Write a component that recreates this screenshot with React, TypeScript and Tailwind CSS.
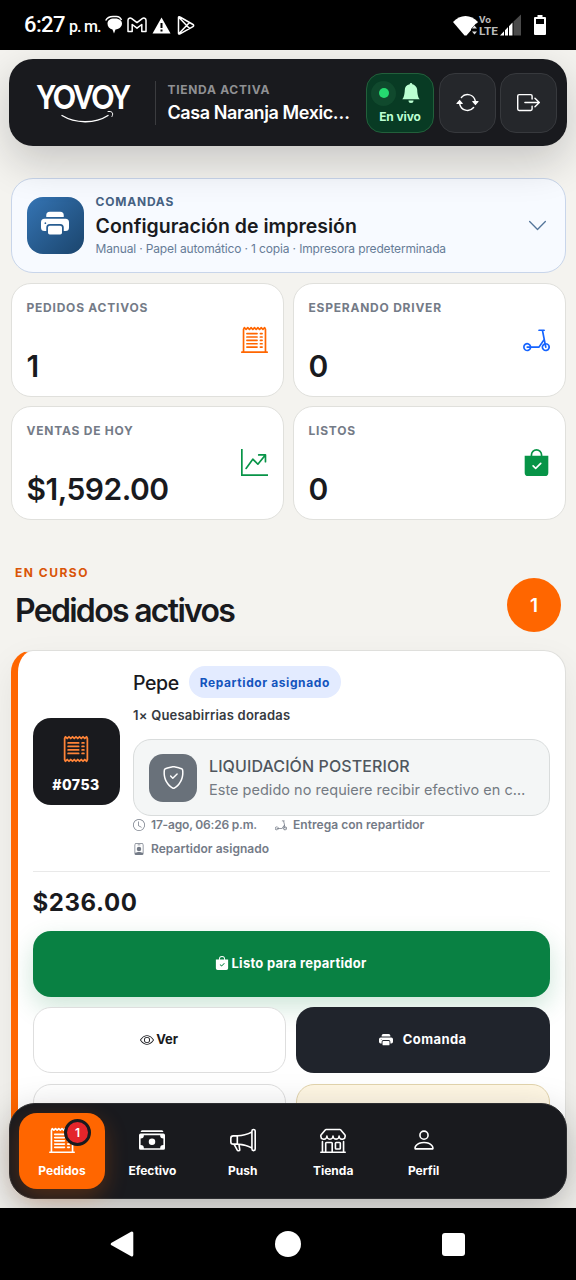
import type { IconType } from "react-icons";
import {
  BsArrowRepeat,
  BsBagCheckFill,
  BsBellFill,
  BsBoxArrowRight,
  BsCashStack,
  BsChevronDown,
  BsClock,
  BsEye,
  BsGraphUpArrow,
  BsMegaphone,
  BsPerson,
  BsPersonBadge,
  BsPrinterFill,
  BsReceipt,
  BsReceiptCutoff,
  BsScooter,
  BsShieldCheck,
  BsShop,
} from "react-icons/bs";

function StatusBar() {
  return (
    <div className="flex h-[50px] shrink-0 items-center justify-between bg-black pl-6 pr-[30px] font-['Roboto',sans-serif] text-white">
      <div className="flex items-center">
        <span className="text-[22px] font-medium leading-none tracking-[-0.6px]">6:27</span>
        <span className="ml-[4px] mt-[3px] text-[16px] font-medium leading-none tracking-[-0.8px]">p. m.</span>
        <svg className="ml-[4px]" width="18" height="20" viewBox="0 0 18 20">
          <path d="M9 3.500C5 3.500 2.500 5.500 2.500 8.500s2 5.500 5 6l1.500 4 1.500-4c4-.5 6.500-3 6.500-6S14 3 9 3.500z" fill="#fff" />
          <path d="M.7 5.500C2 3 5 1.500 8 1.500h3.500c2.500 0 4 1.300 5 3.500" fill="none" stroke="#fff" strokeWidth="1.500" />
        </svg>
        <svg className="ml-[4px]" width="20" height="16" viewBox="0 0 20 16" fill="none" stroke="#fff" strokeWidth="1.500">
          <path d="M1 3.200C1 1.200 3.200.4 4.800 1.600L10 5.600l5.200-4C16.800.4 19 1.200 19 3.200V14.500h-4.200V7.500L10 11.200 5.200 7.500v7H1z" strokeLinejoin="round" />
        </svg>
        <svg className="ml-[5px]" width="19" height="17" viewBox="0 0 19 17">
          <path d="M9.500.500L18.500 16.500H.500z" fill="#fff" />
          <path d="M8.500 6h2v5h-2zM8.500 12.500h2v2h-2z" fill="#000" />
        </svg>
        <svg className="ml-[6px]" width="18" height="19" viewBox="0 0 18 19" fill="none" stroke="#fff" strokeWidth="1.500" strokeLinejoin="round">
          <path d="M1.500 1.300v16c0 .8.8 1 1.500.6l13-7.300c.9-.5.9-1.600 0-2.100L3 1C2.200.5 1.500.7 1.500 1.300zM2 1.500l10.500 11M2 17.500l10.500-11" />
        </svg>
      </div>
      <div className="flex items-center">
        <svg width="69" height="24" viewBox="0 0 69 24">
          <path d="M0 9C7 1 18 1 25 9L13.500 22.500h-2z" fill="#fff" />
          <path d="M18 16l5-5.500h4v12h-9z" fill="#000" />
          <path d="M19 15.500l2.500-3 2.500 3zM19 18.500h5l-2.500 3z" fill="#ddd" />
          <text x="26" y="10" fontSize="9.500" fontWeight="700" fill="#bbb" textLength="12" lengthAdjust="spacingAndGlyphs">Vo</text>
          <text x="26" y="21.800" fontSize="10.500" fontWeight="700" fill="#bbb" textLength="19" lengthAdjust="spacingAndGlyphs">LTE</text>
          <path d="M47 22.500l12.500-13v13z" fill="#fff" />
          <path d="M60.500 8.500L68 1.500v21h-7.500z" fill="#4a4a4a" />
          <path d="M51.500 10v13M55.500 10v13" stroke="#000" strokeWidth="1" />
        </svg>
        <svg className="ml-[12px]" width="12" height="20" viewBox="0 0 12 20">
          <path d="M3.500 0h5v2H11a1 1 0 011 1v16a1 1 0 01-1 1H1a1 1 0 01-1-1V3a1 1 0 011-1h2.500z" fill="#fff" />
          <path d="M2 4h8v5H2z" fill="#000" />
        </svg>
      </div>
    </div>
  );
}

function Logo() {
  return (
    <svg className="-mt-2 overflow-visible" width="96" height="52" viewBox="0 -12 96 52" fill="none" stroke="#fff" strokeLinecap="round">
      <text
        x="0"
        y="24"
        className="font-['Lato',sans-serif] text-[32px] font-black tracking-[-1.400px]"
        fill="#fff"
        stroke="none"
        textLength="92"
        lengthAdjust="spacingAndGlyphs"
      >
        YOVOY
      </text>
      <path d="M25 30.500C38 38.500 58 39 71 30.500" strokeWidth="1.400" />
      <path d="M71 26.500c3.500-.5 6 1 4 5" strokeWidth="1" />
    </svg>
  );
}

function Header() {
  return (
    <header className="relative z-10 mx-[9px] mt-[9px] flex h-[87px] shrink-0 items-center rounded-[24px] bg-[#191a1e] pl-7 pr-[10px] shadow-[0_16px_42px_rgba(20,20,24,0.2)]">
      <Logo />
      <div className="ml-[22px] h-11 w-px bg-white/15" />
      <div className="ml-[11.500px] w-[186px]">
        <p className="mt-0.5 text-[12px] font-bold leading-4 tracking-[0.7px] text-[#8f9093]">TIENDA ACTIVA</p>
        <p className="mt-[3px] whitespace-nowrap text-[18px] font-semibold leading-6 tracking-[-0.400px] text-white">Casa Naranja Mexic…</p>
      </div>
      <div className="ml-auto flex gap-[4.500px]">
        <button className="flex h-[60px] w-[68px] flex-col items-center rounded-2xl border border-[#22603b] bg-[#083b24] pt-[7px]">
          <span className="ml-1 flex items-center gap-[5px] self-start">
            <span className="flex size-[25px] items-center justify-center rounded-full bg-[#10492d]">
              <span className="size-[10px] rounded-full bg-[#25d96f]" />
            </span>
            <BsBellFill className="size-5 text-[#bbffd2]" />
          </span>
          <span className="mt-[3px] text-[12px] font-bold leading-4 tracking-[-0.100px] text-[#bbffd2]">En vivo</span>
        </button>
        <HeaderButton icon={BsArrowRepeat} />
        <HeaderButton icon={BsBoxArrowRight} />
      </div>
    </header>
  );
}

function HeaderButton({ icon: Icon }: { icon: IconType }) {
  return (
    <button className="flex h-[60px] w-[57px] items-center justify-center rounded-2xl border border-[#37393d] bg-[#25272b]">
      <Icon className="size-[23px] text-white" />
    </button>
  );
}

function PrintSettings() {
  return (
    <section className="mx-[10.500px] mt-8 flex h-[95px] shrink-0 items-center rounded-[22px] border border-[#c8d5ea] bg-[#f7faff] pl-[15px] pr-[17px]">
      <div className="flex size-[57px] items-center justify-center rounded-2xl bg-linear-to-br from-[#3575b5] to-[#1b456d]">
        <BsPrinterFill className="-mt-1 size-7 text-white" />
      </div>
      <div className="ml-[12px] whitespace-nowrap">
        <p className="text-[12px] font-bold leading-4 tracking-[0.8px] text-[#466283]">COMANDAS</p>
        <p className="mt-[4px] text-[19.500px] font-semibold leading-6 tracking-[0.020px] text-[#191a1e]">Configuración de impresión</p>
        <p className="mt-[3px] text-[12px] leading-4 tracking-[-0.150px] text-[#667c97]">
          Manual · Papel automático · 1 copia · Impresora predeterminada
        </p>
      </div>
      <BsChevronDown className="ml-auto size-[21px] text-[#54759a]" />
    </section>
  );
}

interface StatProps {
  label: string;
  value: string;
  icon: IconType;
  color: string;
}

const stats: StatProps[] = [
  { label: "PEDIDOS ACTIVOS", value: "1", icon: BsReceiptCutoff, color: "text-[#ff6600]" },
  { label: "ESPERANDO DRIVER", value: "0", icon: BsScooter, color: "text-[#1463ff]" },
  { label: "VENTAS DE HOY", value: "$1,592.00", icon: BsGraphUpArrow, color: "text-[#079447]" },
  { label: "LISTOS", value: "0", icon: BsBagCheckFill, color: "text-[#079447]" },
];

function StatCard({ label, value, icon: Icon, color }: StatProps) {
  return (
    <div className="flex h-[114px] items-center justify-between rounded-[20px] border border-[#e0e0dc] bg-white pl-[15px] pr-[15px]">
      <div className="flex h-full flex-col pt-4">
        <p className="text-[12px] font-bold leading-4 tracking-[0.770px] text-[#747b87]">{label}</p>
        <p className="mt-[32px] text-[30px] font-semibold leading-9 tracking-[-0.500px] text-[#191a1e]">{value}</p>
      </div>
      <Icon className={`mb-px size-[27px] ${color}`} />
    </div>
  );
}

function SectionTitle() {
  return (
    <div className="mx-[15px] mt-[45px] flex shrink-0 items-end justify-between">
      <div>
        <p className="text-[12px] font-bold leading-4 tracking-[1.500px] text-[#d95407]">EN CURSO</p>
        <h2 className="mt-2.5 text-[32px] font-semibold leading-10 tracking-[-1.700px] text-[#191a1e]">Pedidos activos</h2>
      </div>
      <span className="-mb-px flex size-[54px] items-center justify-center rounded-full bg-[#ff6600] pt-0.5 text-[19px] font-semibold text-white">1</span>
    </div>
  );
}

const metas: { icon: IconType; text: string; tracking?: string }[] = [
  { icon: BsClock, text: "17-ago, 06:26 p.m.", tracking: "tracking-[-0.190px]" },
  { icon: BsScooter, text: "Entrega con repartidor", tracking: "tracking-[0.040px]" },
  { icon: BsPersonBadge, text: "Repartidor asignado", tracking: "tracking-[0.040px]" },
];

function OrderCard() {
  return (
    <article className="mx-[10.500px] mt-[19px] shrink-0 rounded-[22px] border border-l-[7px] border-[#dfdfdc] border-l-[#ff6600] bg-white px-[15px] py-[15px] shadow-[0_14px_36px_rgba(20,20,24,0.07)]">
      <div className="flex items-center gap-[13.500px]">
        <div className="mt-[0.500px] flex size-[87px] shrink-0 flex-col items-center rounded-[18px] bg-[#191a1e] pt-[17px]">
          <BsReceipt className="size-7 text-[#ff8438]" />
          <span className="mt-[14px] text-[14px] font-extrabold leading-4 tracking-[0.500px] text-white">#0753</span>
        </div>
        <div className="min-w-0 flex-1 whitespace-nowrap">
          <div className="flex items-center gap-2.5">
            <h3 className="mt-[1px] text-[19.500px] font-medium leading-7 tracking-[-0.4px] text-[#191a1e]">Pepe</h3>
            <span className="flex h-8 w-[152px] items-center justify-center rounded-full bg-[#e3ebff] pt-px text-[12px] font-bold tracking-[0.600px] text-[#1454bd]">
              Repartidor asignado
            </span>
          </div>
          <p className="mt-[7px] text-[13px] font-semibold leading-5 tracking-[0.210px] text-[#363a41]">1× Quesabirrias doradas</p>
          <div className="mt-[14px] flex h-[77px] items-center gap-3 rounded-[18px] border border-[#d9dcdc] bg-[#f4f6f6] px-[15px]">
            <div className="flex size-12 shrink-0 items-center justify-center rounded-[14px] bg-[#69717a]">
              <BsShieldCheck className="mb-px size-[23px] text-white" />
            </div>
            <div className="pt-px">
              <p className="text-[16px] font-medium leading-6 tracking-[0.100px] text-[#4f565e]">LIQUIDACIÓN POSTERIOR</p>
              <p className="text-[14.500px] leading-6 tracking-[0.020px] text-[#747b83]">Este pedido no requiere recibir efectivo en c…</p>
            </div>
          </div>
          <div className="mt-px flex flex-wrap gap-x-[18px] gap-y-2">
            {metas.map(({ icon: Icon, text, tracking }) => (
              <span key={text} className="flex items-center gap-[6px] text-[12px] font-semibold leading-4 text-[#747b87]">
                <Icon className="mb-px size-3" />
                <span className={tracking}>{text}</span>
              </span>
            ))}
          </div>
        </div>
      </div>
      <div className="mt-[14px] border-t border-[#e9e9e9] pt-[15px]">
        <p className="text-[24px] font-bold leading-8 tracking-[0.600px] text-[#191a1e]">$236.00</p>
        <div className="mt-[12px] grid grid-cols-2 gap-x-[10.500px] gap-y-[10.300px] text-[13px] font-bold">
          <button className="col-span-2 flex h-[66px] items-center justify-center gap-[2px] rounded-[18px] bg-[#098143] tracking-[0.270px] text-white shadow-[0_10px_26px_rgba(9,129,67,0.2)]">
            <BsBagCheckFill className="mb-0.5 size-[14px]" />
            Listo para repartidor
          </button>
          <button className="flex h-[66px] items-center justify-center gap-[2px] rounded-[18px] border border-[#dedede] bg-white pb-px text-[#191a1e]">
            <BsEye className="size-[14px]" />
            Ver
          </button>
          <button className="flex h-[66px] items-center justify-center gap-[9.500px] rounded-[18px] bg-[#20242c] pb-px tracking-[0.400px] text-white">
            <BsPrinterFill className="size-[14px]" />
            Comanda
          </button>
          <button className="h-[66px] rounded-[18px] border border-[#dedede] bg-white" />
          <button className="h-[66px] rounded-[18px] border border-[#e2d4ad] bg-[#fff7e4]" />
        </div>
      </div>
    </article>
  );
}

const tabs: { label: string; icon: IconType; badge?: number }[] = [
  { label: "Pedidos", icon: BsReceiptCutoff, badge: 1 },
  { label: "Efectivo", icon: BsCashStack },
  { label: "Push", icon: BsMegaphone },
  { label: "Tienda", icon: BsShop },
  { label: "Perfil", icon: BsPerson },
];

function TabBar() {
  return (
    <nav className="absolute inset-x-[9px] bottom-[9px] z-20 flex h-24 gap-[4.400px] rounded-[26px] border border-[#2c2d30] bg-[#191a1e] px-[9px] py-[9px] shadow-[0_14px_40px_rgba(20,20,24,0.28)]">
      {tabs.map(({ label, icon: Icon, badge }) => (
        <a
          key={label}
          className={`relative flex h-[76px] w-[86px] flex-col items-center rounded-[18px] pt-[14px] text-white ${
            badge ? "bg-[#ff6600] shadow-[0_8px_22px_rgba(255,102,0,0.25)]" : ""
          }`}
        >
          <Icon className="size-[26px]" />
          <span className="mt-[10px] text-[12px] font-bold leading-4">{label}</span>
          {badge && (
            <span className="absolute left-[45px] top-[6px] flex size-[27px] items-center justify-center rounded-full border-[3px] border-[#191a1e] bg-[#e4252b] text-[12px] font-semibold">
              {badge}
            </span>
          )}
        </a>
      ))}
    </nav>
  );
}

function SystemNav() {
  return (
    <div className="flex h-[72px] shrink-0 items-center justify-between bg-black pl-[110px] pr-[111.500px]">
      <svg width="24" height="26" viewBox="0 0 24 26" fill="#fff" stroke="#fff" strokeWidth="3" strokeLinejoin="round">
        <path d="M2.300 13L21.800 2v22z" />
      </svg>
      <span className="size-[26px] rounded-full bg-white" />
      <span className="size-[23px] rounded-[3px] bg-white" />
    </div>
  );
}

export default function App() {
  return (
    <div className="flex h-[1280px] w-[576px] flex-col overflow-hidden bg-[#f4f3ef] font-['Inter',sans-serif]">
      <StatusBar />
      <main className="relative flex min-h-0 flex-1 flex-col overflow-hidden">
        <Header />
        <PrintSettings />
        <section className="mx-[10.500px] mt-[10px] grid shrink-0 grid-cols-2 gap-[9px]">
          {stats.map((stat) => (
            <StatCard key={stat.label} {...stat} />
          ))}
        </section>
        <SectionTitle />
        <OrderCard />
        <TabBar />
      </main>
      <SystemNav />
    </div>
  );
}
